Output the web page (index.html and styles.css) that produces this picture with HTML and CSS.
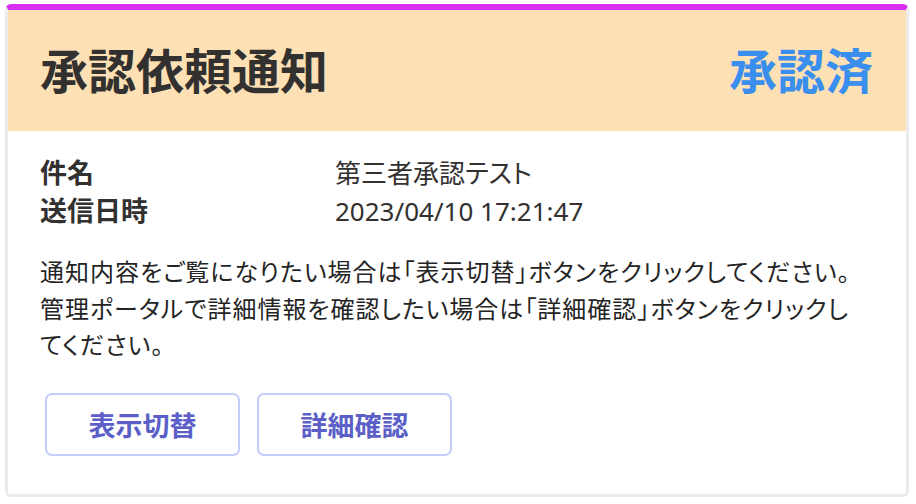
FILE: index.html
```html
<!DOCTYPE html>
<html lang="ja">
<head>
  <meta charset="UTF-8">
  <meta name="viewport" content="width=device-width, initial-scale=1">
  <title>承認依頼通知</title>
  <link rel="stylesheet" href="styles.css">
</head>
<body>
  <div class="card">
    <header class="card-header">
      <h1>承認依頼通知</h1>
      <span class="status">承認済</span>
    </header>

    <div class="card-body">
      <dl class="facts">
        <dt>件名</dt>
        <dd>第三者承認テスト</dd>
        <dt>送信日時</dt>
        <dd>2023/04/10 17:21:47</dd>
      </dl>

      <p class="message">通知内容をご覧になりたい場合は「表示切替」ボタンをクリックしてください。<br>管理ポータルで詳細情報を確認したい場合は「詳細確認」ボタンをクリックしてください。</p>

      <div class="actions">
        <button type="button">表示切替</button>
        <button type="button">詳細確認</button>
      </div>
    </div>
  </div>
</body>
</html>
```

FILE: styles.css
```css
* { margin: 0; padding: 0; box-sizing: border-box; }
body {
  font-family: 'Noto Sans', 'Noto Sans CJK JP', sans-serif;
  font-feature-settings: "palt";
  background: #ffffff;
  color: #242424;
  margin: 4px 7px 7px 5px;
}
.card {
  background: #fff;
  border: 3px solid #ebebeb;
  border-top: 6px solid #d92ef0;
  border-radius: 6px;
  overflow: hidden;
}
.card-header {
  background: #fde0b3;
  height: 121px;
  padding: 0 33px 0 32px;
  display: flex;
  align-items: center;
  justify-content: space-between;
}
.card-header h1 {
  font-size: 48px;
  font-weight: 700;
  color: #323130;
  line-height: 1;
}
.status {
  font-size: 48px;
  font-weight: 700;
  color: #3a8eee;
  line-height: 1;
}
.card-body {
  padding: 23px 33px 38px 32px;
}
.facts {
  display: grid;
  grid-template-columns: 295px 1fr;
  line-height: 38px;
  color: #323130;
}
.facts dt {
  font-size: 27px;
  font-weight: 700;
}
.facts dd {
  font-size: 26px;
  font-weight: 400;
}
.message {
  max-width: 815px;
  margin-top: 24px;
  font-size: 24px;
  line-height: 36.5px;
  letter-spacing: 1px;
  color: #242424;
}
.actions {
  display: flex;
  gap: 17px;
  margin-top: 29px;
  padding-left: 5px;
}
.actions button {
  width: 195px;
  height: 63px;
  background: #fff;
  border: 2px solid #c5cbfa;
  border-radius: 7px;
  font-family: inherit;
  font-feature-settings: inherit;
  font-size: 27px;
  font-weight: 700;
  color: #5b5fc7;
  cursor: pointer;
}
```
